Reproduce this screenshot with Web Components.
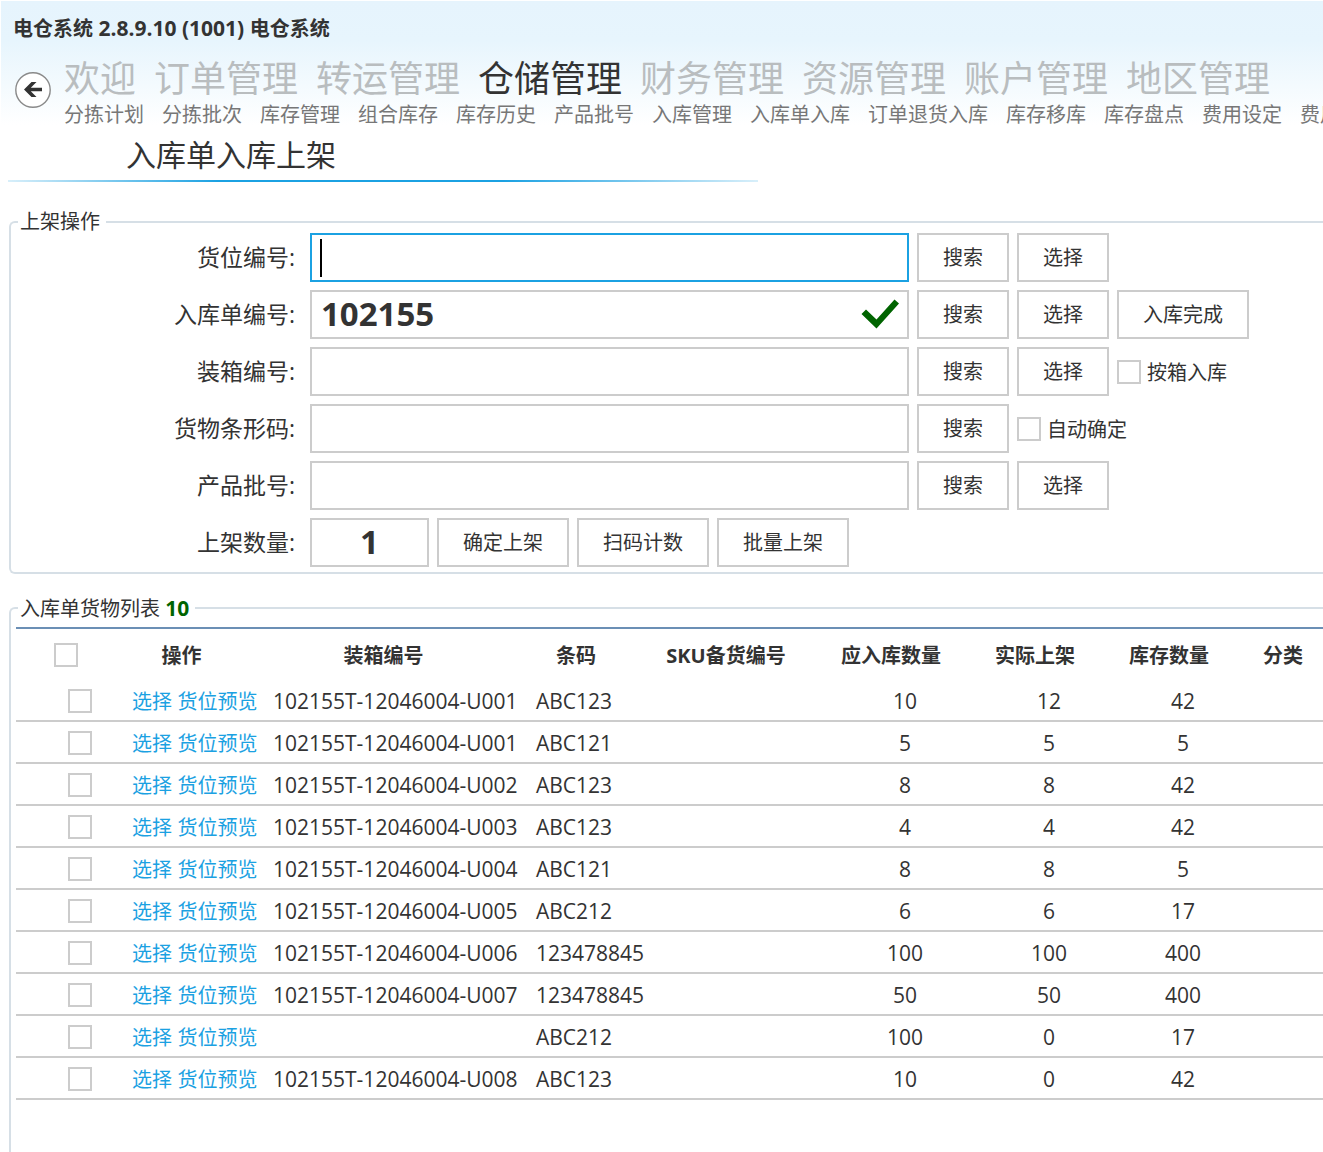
<!DOCTYPE html>
<html lang="zh-CN">
<head>
<meta charset="utf-8">
<meta name="viewport" content="width=device-width, initial-scale=1">
<title>入库单入库上架</title>
<style>
  body{
    margin: 0;
    background-color: white;
    color: #333;
    font-family: "Open Sans", "Noto Sans CJK SC", sans-serif;
    font-size: 20px;
    overflow-x: hidden;
  }
</style>
</head>
<body>
<wms-app></wms-app>

<script>
// top bar: system name, back button, main menu and sub menu
class AppHeader extends HTMLElement{
  constructor(){
    super();
    this.attachShadow({mode: "open"})
  }
  connectedCallback(){
    const menu = ["欢迎", "订单管理", "转运管理", "仓储管理", "财务管理", "资源管理", "账户管理", "地区管理"];
    const sub = ["分拣计划", "分拣批次", "库存管理", "组合库存", "库存历史", "产品批号", "入库管理", "入库单入库", "订单退货入库", "库存移库", "库存盘点", "费用设定", "费用管理"];
    this.shadowRoot.innerHTML = `
    <style>
      :host{
        display: block;
        margin: 1px 0 0 1px;
        background: linear-gradient(#e6f4fd, #e7f5fd 40px, white 124px);
      }
      .system{
        height: 55px;
        padding-left: 12px;
        font-weight: bold;
        line-height: 54px;
      }
      .system span{
        font-size: 21px;
      }
      .bar{
        display: flex;
        align-items: flex-start;
        gap: 13px;
        padding-left: 14px;
      }
      button{
        flex: none;
        width: 36px;
        height: 36px;
        margin-top: 16px;
        padding: 0;
        border: 0;
        background: none;
      }
      svg{
        display: block;
      }
      nav{
        display: flex;
        gap: 18px;
        white-space: nowrap;
      }
      a{
        flex: none;
        text-decoration: none;
      }
      .menu{
        font-size: 36px;
        line-height: 46px;
      }
      .menu a{
        color: #b9bdbf;
      }
      .menu a.active{
        color: #333;
      }
      .sub{
        line-height: 26px;
      }
      .sub a{
        color: #777;
      }
    </style>
    <div class="system">电仓系统<span> 2.8.9.10 (1001) </span>电仓系统</div>
    <div class="bar">
      <button type="button" aria-label="返回">
        <svg width="36" height="36" viewBox="0 0 36 36">
          <circle cx="18" cy="18" r="17.2" fill="white" stroke="#8a8a8a" stroke-width="1.4"/>
          <path d="M9 17.500L16.500 10H21.500L15.800 15.700H27V19.300H15.800L21.500 25H16.500Z" fill="#333"/>
        </svg>
      </button>
      <div>
        <nav class="menu">${menu.map(t => `<a href="#"${t === "仓储管理" ? ' class="active"' : ""}>${t}</a>`).join("")}</nav>
        <nav class="sub">${sub.map(t => `<a href="#">${t}</a>`).join("")}</nav>
      </div>
    </div>
    `;
  }
};

// page heading with the fading blue rule
class PageTitle extends HTMLElement{
  constructor(){
    super();
    this.attachShadow({mode: "open"}).innerHTML = `
    <style>
      :host{
        display: block;
        padding: 2px 0 6px 8px;
      }
      h1{
        margin: 0;
        padding-left: 118px;
        font-size: 30px;
        font-weight: normal;
        line-height: 50px;
      }
      .rule{
        max-width: 750px;
        height: 2px;
        background: linear-gradient(90deg, #d8effa, #1ba1e2 28%, #1ba1e2 66%, #d8effa);
      }
    </style>
    <h1><slot></slot></h1>
    <div class="rule"></div>
    `;
  }
};

// framed group, the frame runs on past the right edge
class GroupPanel extends HTMLElement{
  constructor(){
    super();
    this.attachShadow({mode: "open"}).innerHTML = `
    <style>
      :host{
        display: flex;
        margin: 23px 0 0 9px;
      }
      fieldset{
        flex: 1;
        min-width: 0;
        margin: 0;
        padding: 0 0 5px 5px;
        border: 2px solid #d6dfe6;
        border-right: 0;
        border-radius: 6px 0 0 6px;
      }
      :host([open-end]) fieldset{
        padding-top: 8px;
        border-bottom: 0;
        border-radius: 6px 0 0 0;
      }
      legend{
        height: 22px;
        margin-left: 2px;
        padding: 0 6px 0 2px;
        line-height: 22px;
      }
    </style>
    <fieldset>
      <legend><slot name="legend"></slot></legend>
      <slot></slot>
    </fieldset>
    `;
  }
};

// label + text box, buttons go in the slot
class FormRow extends HTMLElement{
  constructor(){
    super();
    this.attachShadow({mode: "open"})
  }
  connectedCallback(){
    const tick = `
      <svg width="38" height="30" viewBox="0 0 38 30">
        <path d="M0.500 15L5 10.500L15.500 20.500L33.500 0.500L38 4.500L15.500 29.500Z" fill="#006400"/>
      </svg>`;
    this.shadowRoot.innerHTML = `
    <style>
      :host{
        display: flex;
        align-items: center;
        gap: 8px;
      }
      label{
        flex: none;
        width: 279px;
        margin-right: 7px;
        padding-bottom: 4px;
        font-size: 23px;
        text-align: right;
      }
      .box{
        display: grid;
        flex: 0 1 599px;
        align-items: center;
      }
      input, svg{
        grid-area: 1 / 1;
      }
      svg{
        justify-self: end;
        margin: 0 10px 2px 0;
      }
      input{
        box-sizing: border-box;
        width: 100%;
        height: 49px;
        padding: 0 9px 3px;
        border: 2px solid #ccc;
        border-radius: 0;
        outline: 0;
        background-color: white;
        color: #333;
        font-family: inherit;
        font-size: 33px;
        font-weight: bold;
      }
      :host([current]) input{
        border-color: #1ba1e2;
        background: linear-gradient(black, black) 8px center / 2px 38px no-repeat;
      }
      :host([short]) .box{
        flex-basis: 119px;
      }
      :host([short]) input{
        text-align: center;
      }
    </style>
    <label for="field">${this.getAttribute("label")}:</label>
    <div class="box">
      <input id="field" type="text" value="${this.getAttribute("value") || ""}">
      ${this.hasAttribute("checked") ? tick : ""}
    </div>
    <slot></slot>
    `;
  }
};

class UiButton extends HTMLElement{
  constructor(){
    super();
    this.attachShadow({mode: "open"}).innerHTML = `
    <style>
      :host{
        display: block;
        flex: none;
      }
      button{
        height: 49px;
        padding: 0 24px 3px;
        border: 2px solid #ccc;
        border-radius: 0;
        background-color: white;
        color: #333;
        font: inherit;
        white-space: nowrap;
      }
      button:hover{
        border-color: #999;
      }
    </style>
    <button type="button"><slot></slot></button>
    `;
  }
};

class UiCheck extends HTMLElement{
  constructor(){
    super();
    this.attachShadow({mode: "open"}).innerHTML = `
    <style>
      :host{
        display: block;
        flex: none;
      }
      label{
        display: flex;
        align-items: center;
        gap: 6px;
      }
      input{
        appearance: none;
        box-sizing: border-box;
        width: 24px;
        height: 24px;
        margin: 0;
        border: 2px solid #ccc;
        background-color: white;
      }
      input:checked{
        background-color: #1ba1e2;
      }
    </style>
    <label><input type="checkbox"><slot></slot></label>
    `;
  }
};

// goods of the inbound order
class GoodsTable extends HTMLElement{
  constructor(){
    super();
    this.attachShadow({mode: "open"})
  }
  connectedCallback(){
    const rows = [
      ["102155T-12046004-U001", "ABC123", 10, 12, 42],
      ["102155T-12046004-U001", "ABC121", 5, 5, 5],
      ["102155T-12046004-U002", "ABC123", 8, 8, 42],
      ["102155T-12046004-U003", "ABC123", 4, 4, 42],
      ["102155T-12046004-U004", "ABC121", 8, 8, 5],
      ["102155T-12046004-U005", "ABC212", 6, 6, 17],
      ["102155T-12046004-U006", "123478845", 100, 100, 400],
      ["102155T-12046004-U007", "123478845", 50, 50, 400],
      ["", "ABC212", 100, 0, 17],
      ["102155T-12046004-U008", "ABC123", 10, 0, 42]
    ];
    this.shadowRoot.innerHTML = `
    <style>
      :host{
        display: block;
        overflow: hidden;
      }
      table{
        width: 100%;
        min-width: 1322px;
        table-layout: fixed;
        border-collapse: separate;
        border-spacing: 0;
        border-top: 2px solid #6b8fb5;
        white-space: nowrap;
      }
      th{
        height: 51px;
        padding: 0 14px 0 0;
      }
      td{
        box-sizing: border-box;
        height: 42px;
        padding: 2px 0 0 14px;
        border-bottom: 2px solid #ccc;
        font-size: 21px;
        line-height: 28px;
      }
      th:first-child{
        padding-left: 12px;
      }
      td:first-child{
        padding-left: 26px;
      }
      ui-check{
        width: 24px;
        margin: 0 auto;
      }
      .num{
        text-align: center;
      }
      a{
        color: #1ba1e2;
        font-size: 20px;
        text-decoration: none;
      }
    </style>
    <table>
      <colgroup>
        <col style="width: 102px"><col style="width: 141px"><col style="width: 263px">
        <col style="width: 122px"><col style="width: 178px"><col style="width: 152px">
        <col style="width: 136px"><col style="width: 132px"><col style="width: 96px">
      </colgroup>
      <thead>
        <tr>
          <th><ui-check></ui-check></th>
          <th>操作</th>
          <th>装箱编号</th>
          <th>条码</th>
          <th>SKU备货编号</th>
          <th>应入库数量</th>
          <th>实际上架</th>
          <th>库存数量</th>
          <th>分类</th>
        </tr>
      </thead>
      <tbody>
        ${rows.map(r => `
        <tr>
          <td><ui-check></ui-check></td>
          <td><a href="#">选择</a> <a href="#">货位预览</a></td>
          <td>${r[0]}</td>
          <td>${r[1]}</td>
          <td></td>
          <td class="num">${r[2]}</td>
          <td class="num">${r[3]}</td>
          <td class="num">${r[4]}</td>
          <td></td>
        </tr>`).join("")}
      </tbody>
    </table>
    `;
  }
};

class WmsApp extends HTMLElement{
  constructor(){
    super();
    this.attachShadow({mode: "open"})
  }
  connectedCallback(){
    this.shadowRoot.innerHTML = `
    <style>
      :host{
        display: flex;
        flex-direction: column;
        min-height: 100vh;
      }
      form{
        display: grid;
        gap: 8px;
      }
      group-panel[open-end]{
        flex: 1;
      }
      b{
        color: #006400;
        font-size: 21px;
      }
    </style>
    <app-header></app-header>
    <page-title>入库单入库上架</page-title>
    <group-panel>
      <span slot="legend">上架操作</span>
      <form>
        <form-row label="货位编号" current>
          <ui-button>搜索</ui-button>
          <ui-button>选择</ui-button>
        </form-row>
        <form-row label="入库单编号" value="102155" checked>
          <ui-button>搜索</ui-button>
          <ui-button>选择</ui-button>
          <ui-button>入库完成</ui-button>
        </form-row>
        <form-row label="装箱编号">
          <ui-button>搜索</ui-button>
          <ui-button>选择</ui-button>
          <ui-check>按箱入库</ui-check>
        </form-row>
        <form-row label="货物条形码">
          <ui-button>搜索</ui-button>
          <ui-check>自动确定</ui-check>
        </form-row>
        <form-row label="产品批号">
          <ui-button>搜索</ui-button>
          <ui-button>选择</ui-button>
        </form-row>
        <form-row label="上架数量" value="1" short>
          <ui-button>确定上架</ui-button>
          <ui-button>扫码计数</ui-button>
          <ui-button>批量上架</ui-button>
        </form-row>
      </form>
    </group-panel>
    <group-panel open-end>
      <span slot="legend">入库单货物列表 <b>10</b></span>
      <goods-table></goods-table>
    </group-panel>
    `;
  }
};

customElements.define("app-header", AppHeader);
customElements.define("page-title", PageTitle);
customElements.define("group-panel", GroupPanel);
customElements.define("form-row", FormRow);
customElements.define("ui-button", UiButton);
customElements.define("ui-check", UiCheck);
customElements.define("goods-table", GoodsTable);
customElements.define("wms-app", WmsApp);
</script>
</body>
</html>
